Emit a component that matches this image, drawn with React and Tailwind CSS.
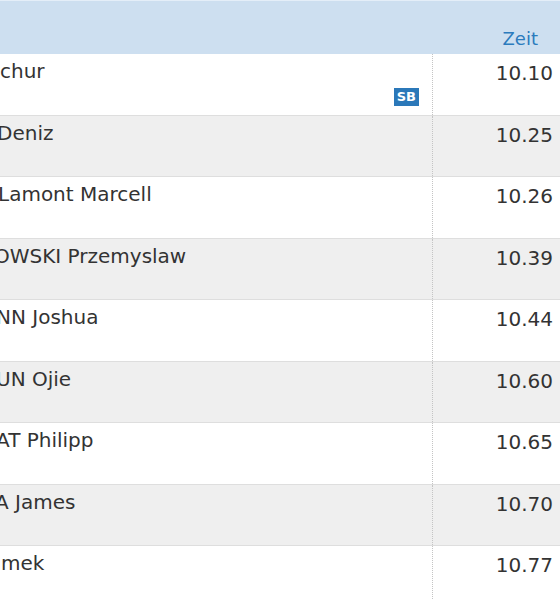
import React from "react";

const rows = [
  { name: "chur", off: "ml-[0px]", time: "10.10", sb: true },
  { name: "Deniz", off: "ml-[-3px]", time: "10.25" },
  { name: "Lamont Marcell", off: "ml-[-2px]", time: "10.26" },
  { name: "OWSKI Przemyslaw", off: "ml-[-6px]", time: "10.39" },
  { name: "NN Joshua", off: "ml-[-4px]", time: "10.44" },
  { name: "UN Ojie", off: "ml-[-4px]", time: "10.60" },
  { name: "AT Philipp", off: "ml-[-4px]", time: "10.65" },
  { name: "A James", off: "ml-[-5px]", time: "10.70" },
  { name: "mek", off: "ml-[1px]", time: "10.77" },
];

export default function App() {
  return (
    <div
      className="w-[560px] h-[600px] overflow-hidden bg-white text-[#333333]"
      style={{ fontFamily: '"DejaVu Sans", "Liberation Sans", sans-serif' }}
    >
      <div className="flex h-[54px] bg-[#cddff0] border-t border-[#e4eef8]">
        <div className="flex-1" />
        <div className="w-[128px] flex items-end justify-end pr-[22px] pb-[4px]">
          <span className="text-[18px] leading-[22px] text-[#2b7bbd]">Zeit</span>
        </div>
      </div>
      {rows.map((r, i) => (
        <div
          key={i}
          className={`flex h-[61.5px] border-b-[1.5px] border-[#dedede] ${
            i % 2 === 1 ? "bg-[#efefef]" : "bg-white"
          }`}
        >
          <div className="relative flex-1 overflow-hidden">
            <div className={`pt-[5px] text-[20px] leading-[24px] whitespace-nowrap ${r.off}`}>
              {r.name}
            </div>
            {r.sb && (
              <span className="absolute right-[13px] bottom-[9px] bg-[#2b78b9] text-white font-bold text-[13px] leading-[18px] px-[3px]">
                SB
              </span>
            )}
          </div>
          <div className="w-[128px] border-l border-dotted border-[#c4c4c4] text-right pr-[7px] pt-[7px] text-[20px] leading-[24px]">
            {r.time}
          </div>
        </div>
      ))}
    </div>
  );
}
